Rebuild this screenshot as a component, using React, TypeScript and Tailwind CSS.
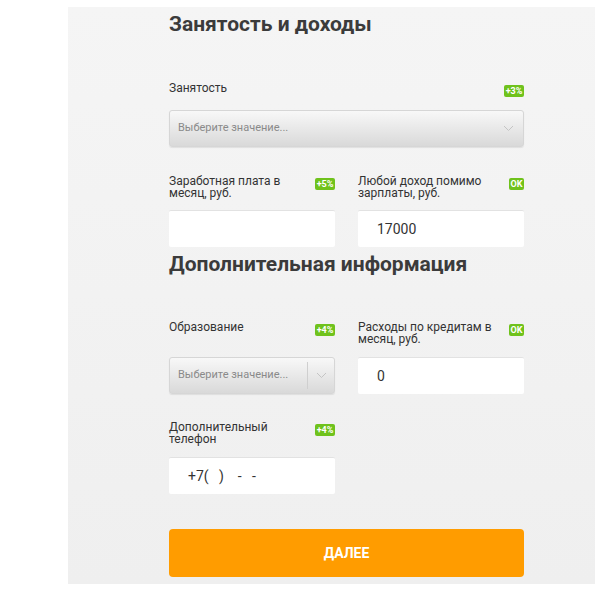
import React from 'react';

const Badge: React.FC<{ text: string; w: string }> = ({ text, w }) => (
  <span
    className={`mt-[3px] h-[12px] ${w} shrink-0 rounded-[2px] bg-[#6fc21c] text-center text-[9px] font-bold leading-[12px] text-white`}
  >
    {text}
  </span>
);

const Chevron: React.FC = () => (
  <svg width="11" height="7" viewBox="0 0 11 7" fill="none">
    <path d="M1 1l4.5 4.5L10 1" stroke="#c4c4c4" strokeWidth="1" />
  </svg>
);

const Label: React.FC<{ text: React.ReactNode; badge: string; bw: string; h?: string }> = ({
  text,
  badge,
  bw,
  h = 'h-[24px]',
}) => (
  <div className={`flex ${h} items-start justify-between`}>
    <span className="text-[12px] leading-[12px] text-[#333]">{text}</span>
    <Badge text={badge} w={bw} />
  </div>
);

const Input: React.FC<{ value?: string }> = ({ value }) => (
  <div className="h-[37px] rounded-[2px] border-t border-[#e2e2e2] bg-white pl-[19px] text-[14px] leading-[36px] whitespace-pre text-[#333]">
    {value}
  </div>
);

const App: React.FC = () => {
  return (
    <div className="h-[597px] w-[595px] bg-white pt-[7px] font-['Roboto',sans-serif]">
      <div className="ml-[68px] h-[577px] w-[527px] bg-gradient-to-b from-[#f5f5f5] to-[#efefef] pl-[101px]">
        <div className="w-[355px]">
          <h1 className="pt-[3px] text-[21px] font-bold leading-[28px] text-[#3b3b3b]">
            Занятость и доходы
          </h1>

          <div className="mt-[44px]">
            <Label text="Занятость" badge="+3%" bw="w-[20px]" h="h-[16px]" />
          </div>
          <div className="mt-[12px] flex h-[37px] items-center justify-between rounded-[3px] border border-[#d6d6d6] bg-gradient-to-b from-[#f8f8f8] to-[#d9d9d9] pl-[8px] pr-[9px] shadow-[0_1px_1px_rgba(0,0,0,0.08)]">
            <span className="text-[11px] text-[#8a8a8a]">Выберите значение...</span>
            <Chevron />
          </div>

          <div className="mt-[28px] grid grid-cols-2 gap-x-[23px]">
            <div>
              <Label
                text={
                  <>
                    Заработная плата в<br />
                    месяц, руб.
                  </>
                }
                badge="+5%"
                bw="w-[20px]"
              />
              <div className="mt-[11px]">
                <Input />
              </div>
            </div>
            <div>
              <Label
                text={
                  <>
                    Любой доход помимо<br />
                    зарплаты, руб.
                  </>
                }
                badge="OK"
                bw="w-[15px]"
              />
              <div className="mt-[11px]">
                <Input value="17000" />
              </div>
            </div>
          </div>

          <h2 className="mt-[3px] text-[21px] font-bold leading-[28px] text-[#3b3b3b]">
            Дополнительная информация
          </h2>

          <div className="mt-[43px] grid grid-cols-2 gap-x-[23px]">
            <div>
              <Label text="Образование" badge="+4%" bw="w-[20px]" />
              <div className="mt-[12px] flex h-[37px] items-center rounded-[3px] border border-[#d6d6d6] bg-gradient-to-b from-[#f8f8f8] to-[#d9d9d9] pl-[8px] shadow-[0_1px_1px_rgba(0,0,0,0.08)]">
                <span className="grow text-[11px] text-[#8a8a8a]">Выберите значение...</span>
                <span className="h-[27px] w-px bg-[#cfcfcf]" />
                <span className="flex w-[26px] justify-center">
                  <Chevron />
                </span>
              </div>
            </div>
            <div>
              <Label
                text={
                  <>
                    Расходы по кредитам в<br />
                    месяц, руб.
                  </>
                }
                badge="OK"
                bw="w-[15px]"
              />
              <div className="mt-[12px]">
                <Input value="0" />
              </div>
            </div>
          </div>

          <div className="mt-[27px] grid grid-cols-2 gap-x-[23px]">
            <div>
              <Label
                text={
                  <>
                    Дополнительный<br />
                    телефон
                  </>
                }
                badge="+4%"
                bw="w-[20px]"
              />
              <div className="mt-[12px]">
                <Input value="+7(   )    -   -" />
              </div>
            </div>
          </div>

          <button className="mt-[35px] h-[48px] w-full rounded-[4px] bg-[#ff9c00] text-[14px] font-bold text-white">
            ДАЛЕЕ
          </button>
        </div>
      </div>
    </div>
  );
};

export default App;
